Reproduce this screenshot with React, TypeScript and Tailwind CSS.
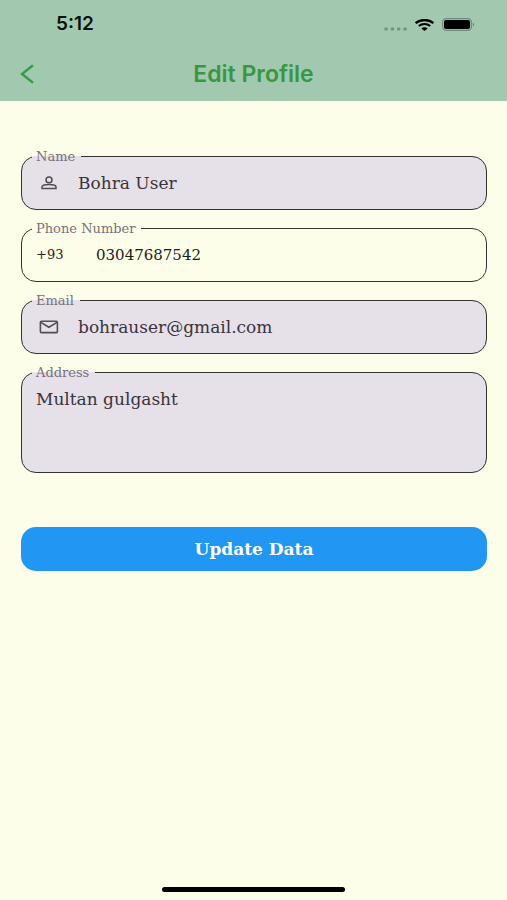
import { ReactNode } from "react"

interface FieldProps {
  id: string
  label: string
  filled?: boolean
  children: ReactNode
}

function Field({ id, label, filled = true, children }: FieldProps) {
  return (
    <fieldset
      className={`min-w-0 rounded-[15px] border border-[#33332f] pl-2.5 pr-4 ${
        filled ? "bg-[#e6e0e9]" : "bg-transparent"
      }`}
    >
      <legend className="pl-1 pr-1.5 pt-0.5 text-[13px] leading-4 text-[#77717a]">
        <label htmlFor={id} className="block">{label}</label>
      </legend>
      {children}
    </fieldset>
  )
}

function StatusBar() {
  return (
    <div className="flex h-[49px] items-center justify-between pl-14 pr-8">
      <span className="text-[19px] font-semibold text-[#07120c]">5:12</span>
      <div className="flex items-center gap-2">
        <svg width="23" height="12" viewBox="0 0 23 12" fill="#75927f" aria-hidden="true">
          <rect x="0.4" y="8.6" width="3.4" height="2.8" rx="1" />
          <rect x="6.7" y="8.6" width="3.4" height="2.8" rx="1" />
          <rect x="13" y="8.6" width="3.4" height="2.8" rx="1" />
          <rect x="19.3" y="8.6" width="3.4" height="2.8" rx="1" />
        </svg>
        <svg width="19" height="12" viewBox="0 0 19 12" fill="none" stroke="#000" aria-hidden="true">
          <path d="M0.6 4C5.6 0 13.4 0 18.4 4" strokeWidth="2.3" />
          <path d="M3.8 7C7 4.4 12 4.4 15.2 7" strokeWidth="2.1" />
          <path d="M6.4 9.4C8.2 8 10.8 8 12.6 9.4L9.5 12Z" fill="#000" stroke="none" />
        </svg>
        <svg width="33" height="13" viewBox="0 0 33 13" aria-hidden="true">
          <rect x="0.6" y="0.6" width="28.8" height="11.8" rx="3.6" fill="none" stroke="#6f8a7b" strokeWidth="1.2" />
          <rect x="2" y="2" width="26" height="9" rx="2" fill="#000" />
          <path d="M30.8 4.5C32.6 5.2 32.6 7.8 30.8 8.5Z" fill="#6f8a7b" />
        </svg>
      </div>
    </div>
  )
}

const inputClass =
  "min-w-0 flex-1 bg-transparent text-[17px] leading-6 text-[#39343d] outline-none"

export default function App() {
  return (
    <div className="flex min-h-screen flex-col bg-[#fdfeea] font-['DejaVu_Serif',serif]">
      <header className="bg-[#a2c9b0] pb-0.5 font-['Inter',sans-serif]">
        <StatusBar />
        <div className="grid h-[50px] grid-cols-[56px_1fr_56px] items-center">
          <button type="button" aria-label="Back" className="flex h-10 items-center pl-5">
            <svg width="14" height="20" viewBox="0 0 14 20" fill="none" stroke="#3a9b42" strokeWidth="2.4" aria-hidden="true">
              <path d="M13 1.2L2 10L13 18.8" />
            </svg>
          </button>
          <h1 className="text-center text-[23px] font-semibold text-[#38983f]">
            Edit Profile
          </h1>
        </div>
      </header>

      <form className="flex flex-col pl-[21px] pr-5 pt-[46px]" onSubmit={(e) => e.preventDefault()}>
        <div className="flex flex-col gap-[9px]">
          <Field id="name" label="Name">
            <div className="flex h-11 items-center pb-2">
              <svg width="16" height="14" viewBox="0 0 16 14" fill="none" stroke="#514c55" strokeWidth="1.5" className="ml-[9px] mr-[21px] shrink-0" aria-hidden="true">
                <ellipse cx="8" cy="3.9" rx="3" ry="2.8" />
                <path d="M1 12.4V11C1 9.5 4.6 8.5 8 8.5S15 9.5 15 11V12.4Z" />
              </svg>
              <input id="name" type="text" defaultValue="Bohra User" className={inputClass} />
            </div>
          </Field>
          <Field id="phone" label="Phone Number" filled={false}>
            <div className="flex h-11 items-center pb-2">
              <span className="w-16 pl-1 text-[13px] leading-6 text-[#22221e]">+93</span>
              <input
                id="phone"
                type="tel"
                defaultValue="03047687542"
                className="min-w-0 flex-1 bg-transparent text-[15px] leading-6 text-[#1b1b18] outline-none"
              />
            </div>
          </Field>
          <Field id="email" label="Email">
            <div className="flex h-11 items-center pb-2">
              <svg width="20" height="14" viewBox="0 0 20 14" fill="none" stroke="#514c55" strokeWidth="1.6" className="ml-[7px] mr-[19px] shrink-0" aria-hidden="true">
                <rect x="1.4" y="1.2" width="17" height="11.4" rx="1.2" />
                <path d="M1.8 2.4L9.9 7.2L18 2.4" />
              </svg>
              <input id="email" type="email" defaultValue="bohrauser@gmail.com" className={inputClass} />
            </div>
          </Field>
          <Field id="address" label="Address">
            <textarea
              id="address"
              defaultValue="Multan gulgasht"
              rows={3}
              className="mb-2 mt-1.5 block h-[77px] w-full resize-none bg-transparent pl-1 text-[17px] leading-6 text-[#39343d] outline-none"
            />
          </Field>
        </div>
        <button
          type="submit"
          className="mt-[54px] h-11 rounded-[15px] bg-[#2196f3] pt-0.5 text-[17px] font-bold text-white"
        >
          Update Data
        </button>
      </form>

      <div className="mx-auto mb-2 mt-auto h-[5px] w-[36%] rounded-full bg-black" />
    </div>
  )
}
